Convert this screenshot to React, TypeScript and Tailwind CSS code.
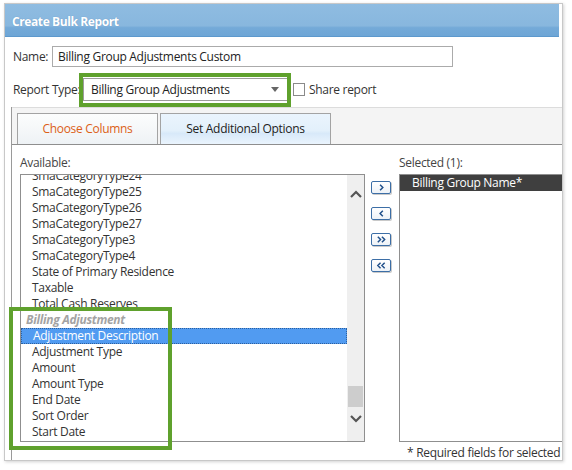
import React from 'react';

const upperItems = [
  'SmaCategoryType24',
  'SmaCategoryType25',
  'SmaCategoryType26',
  'SmaCategoryType27',
  'SmaCategoryType3',
  'SmaCategoryType4',
  'State of Primary Residence',
  'Taxable',
  'Total Cash Reserves',
];

const adjustmentItems = [
  'Adjustment Description',
  'Adjustment Type',
  'Amount',
  'Amount Type',
  'End Date',
  'Sort Order',
  'Start Date',
];

const Chevron: React.FC<{ dir: 'up' | 'down' }> = ({ dir }) => (
  <svg width="12" height="8" viewBox="0 0 12 8">
    <path
      d={dir === 'up' ? 'M1 7 L6 2 L11 7' : 'M1 1 L6 6 L11 1'}
      fill="none"
      stroke="#555"
      strokeWidth="2.2"
    />
  </svg>
);

const MoveButton: React.FC<{ kind: 'r' | 'l' | 'rr' | 'll' }> = ({ kind }) => {
  const paths: Record<string, string> = {
    r: 'M8 3 L11 6 L8 9',
    l: 'M11 3 L8 6 L11 9',
    rr: 'M5.5 3 L8.5 6 L5.5 9 M10 3 L13 6 L10 9',
    ll: 'M8.5 3 L5.5 6 L8.5 9 M13 3 L10 6 L13 9',
  };
  return (
    <div className="w-[20px] h-[13px] rounded-[2px] border border-[#3c6ea6] bg-gradient-to-b from-white to-[#eef2f7] shadow-[1px_1px_0_#c9c9c9] flex items-center justify-center">
      <svg width="18" height="11" viewBox="0 0 18 12">
        <path d={paths[kind]} fill="none" stroke="#1f4f8a" strokeWidth="1.6" />
      </svg>
    </div>
  );
};

export default function App() {
  return (
    <div className="relative w-[572px] h-[470px] bg-white overflow-hidden font-['Segoe_UI','Open_Sans',sans-serif] text-[#333] tracking-[-0.3px]">
      <div className="ml-[4px] mt-[3px] w-[559px] h-[458px] border border-[#c8c8c8] shadow-[1px_1px_3px_rgba(0,0,0,0.18)] bg-white overflow-hidden flex flex-col">
        {/* title bar */}
        <div className="mr-[3px] h-[33px] shrink-0 flex items-center pl-[7px] pt-[4px] border-b border-[#5d99cd] bg-[linear-gradient(to_bottom,#8fbce1_0%,#88b7de_68%,#74aad8_74%,#6ea6d6_100%)]">
          <span className="text-white font-bold text-[12px] tracking-[-0.4px] [text-shadow:0_0_1px_rgba(40,90,140,0.4)]">
            Create Bulk Report
          </span>
        </div>

        {/* name */}
        <div className="flex items-center pl-[8px] mt-[9px] h-[21px] text-[12px]">
          <span className="w-[39px]">Name:</span>
          <div className="w-[401px] h-[21px] border border-[#ababab] flex items-center pl-[5px] text-[#222]">
            Billing Group Adjustments Custom
          </div>
        </div>

        {/* report type */}
        <div className="flex items-center pl-[8px] mt-[11px] h-[23px] text-[12px]">
          <span className="w-[70px] whitespace-nowrap">Report Type:</span>
          <div className="w-[205px] h-[23px] border border-[#9c9c9c] flex items-center pl-[7px] pr-[8px] justify-between text-[#222]">
            <span>Billing Group Adjustments</span>
            <svg width="8" height="5" viewBox="0 0 8 5">
              <path d="M0 0 L8 0 L4 5 Z" fill="#666" />
            </svg>
          </div>
          <div className="ml-[5px] w-[12px] h-[13px] border border-[#8a8a8a] bg-white" />
          <span className="ml-[4px]">Share report</span>
        </div>

        {/* panel */}
        <div className="ml-[6px] mt-[6px] flex-1 border-l border-[#9a9a9a] flex flex-col min-w-[560px]">
          {/* tabs */}
          <div className="h-[38px] shrink-0 border-t border-[#dcdcdc] border-b border-b-[#8e8e8e] bg-[#f4f4f4] flex items-end pl-[5px] gap-[2px] text-[12px]">
            <div className="w-[141px] h-[31px] border border-b-0 border-[#a3a3a3] bg-gradient-to-b from-[#fcfdfd] to-[#eef2f5] flex items-center justify-center text-[#dc5f17]">
              Choose Columns
            </div>
            <div className="w-[171px] h-[31px] border border-b-0 border-[#a3a3a3] bg-[linear-gradient(to_bottom,#eaf4fd_0%,#e3f0fb_55%,#d8e9f9_65%,#eaf4fd_100%)] flex items-center justify-center text-[#222]">
              Set Additional Options
            </div>
          </div>

          {/* body */}
          <div className="flex pl-[8px] pt-[10px] text-[12px]">
            {/* available */}
            <div className="w-[345px] shrink-0 flex flex-col">
              <div className="h-[16px] leading-[16px] text-[#444]">Available:</div>
              <div className="mt-[3px] h-[268px] border border-[#8f8f8f] flex overflow-hidden">
                <div className="flex-1 overflow-hidden">
                  <div className="mt-[-7px]">
                    {upperItems.map((item) => (
                      <div key={item} className="h-[16px] leading-[16px] pl-[11px] whitespace-nowrap">
                        {item}
                      </div>
                    ))}
                    <div className="h-[16px] leading-[16px] pl-[5px] italic font-bold text-[#a3a3a3]">
                      Billing Adjustment
                    </div>
                    {adjustmentItems.map((item, i) => (
                      <div
                        key={item}
                        className={
                          i === 0
                            ? 'h-[16px] leading-[14px] pl-[11px] bg-[#519bf1] text-white border border-dotted border-[#2c5f9e]'
                            : 'h-[16px] leading-[16px] pl-[11px]'
                        }
                      >
                        {item}
                      </div>
                    ))}
                  </div>
                </div>
                <div className="w-[17px] bg-[#efefef] flex flex-col items-center">
                  <div className="mt-[15px]">
                    <Chevron dir="up" />
                  </div>
                  <div className="flex-1" />
                  <div className="w-[15px] h-[21px] bg-[#cdcdcd]" />
                  <div className="mt-[8px] mb-[18px]">
                    <Chevron dir="down" />
                  </div>
                </div>
              </div>
            </div>

            {/* buttons */}
            <div className="ml-[6px] pt-[26px] flex flex-col gap-[13px] shrink-0">
              <MoveButton kind="r" />
              <MoveButton kind="l" />
              <MoveButton kind="rr" />
              <MoveButton kind="ll" />
            </div>

            {/* selected */}
            <div className="ml-[8px] w-[200px] shrink-0 flex flex-col">
              <div className="h-[16px] leading-[16px] text-[#444]">Selected (1):</div>
              <div className="mt-[3px] h-[268px] border border-[#8f8f8f]">
                <div className="h-[16px] leading-[16px] bg-[#3f3f3f] text-white pl-[12px]">
                  Billing Group Name*
                </div>
              </div>
              <div className="mt-[3px] h-[16px] leading-[16px] pl-[8px] whitespace-nowrap text-[#333]">
                * Required fields for selected
              </div>
            </div>
          </div>
        </div>
      </div>

      {/* green highlight annotations */}
      <div className="absolute left-[79px] top-[73px] w-[212px] h-[34px] border-[4px] border-[#5fa12d] pointer-events-none" />
      <div className="absolute left-[9px] top-[307px] w-[163px] h-[143px] border-[4px] border-[#5fa12d] pointer-events-none" />
    </div>
  );
}
